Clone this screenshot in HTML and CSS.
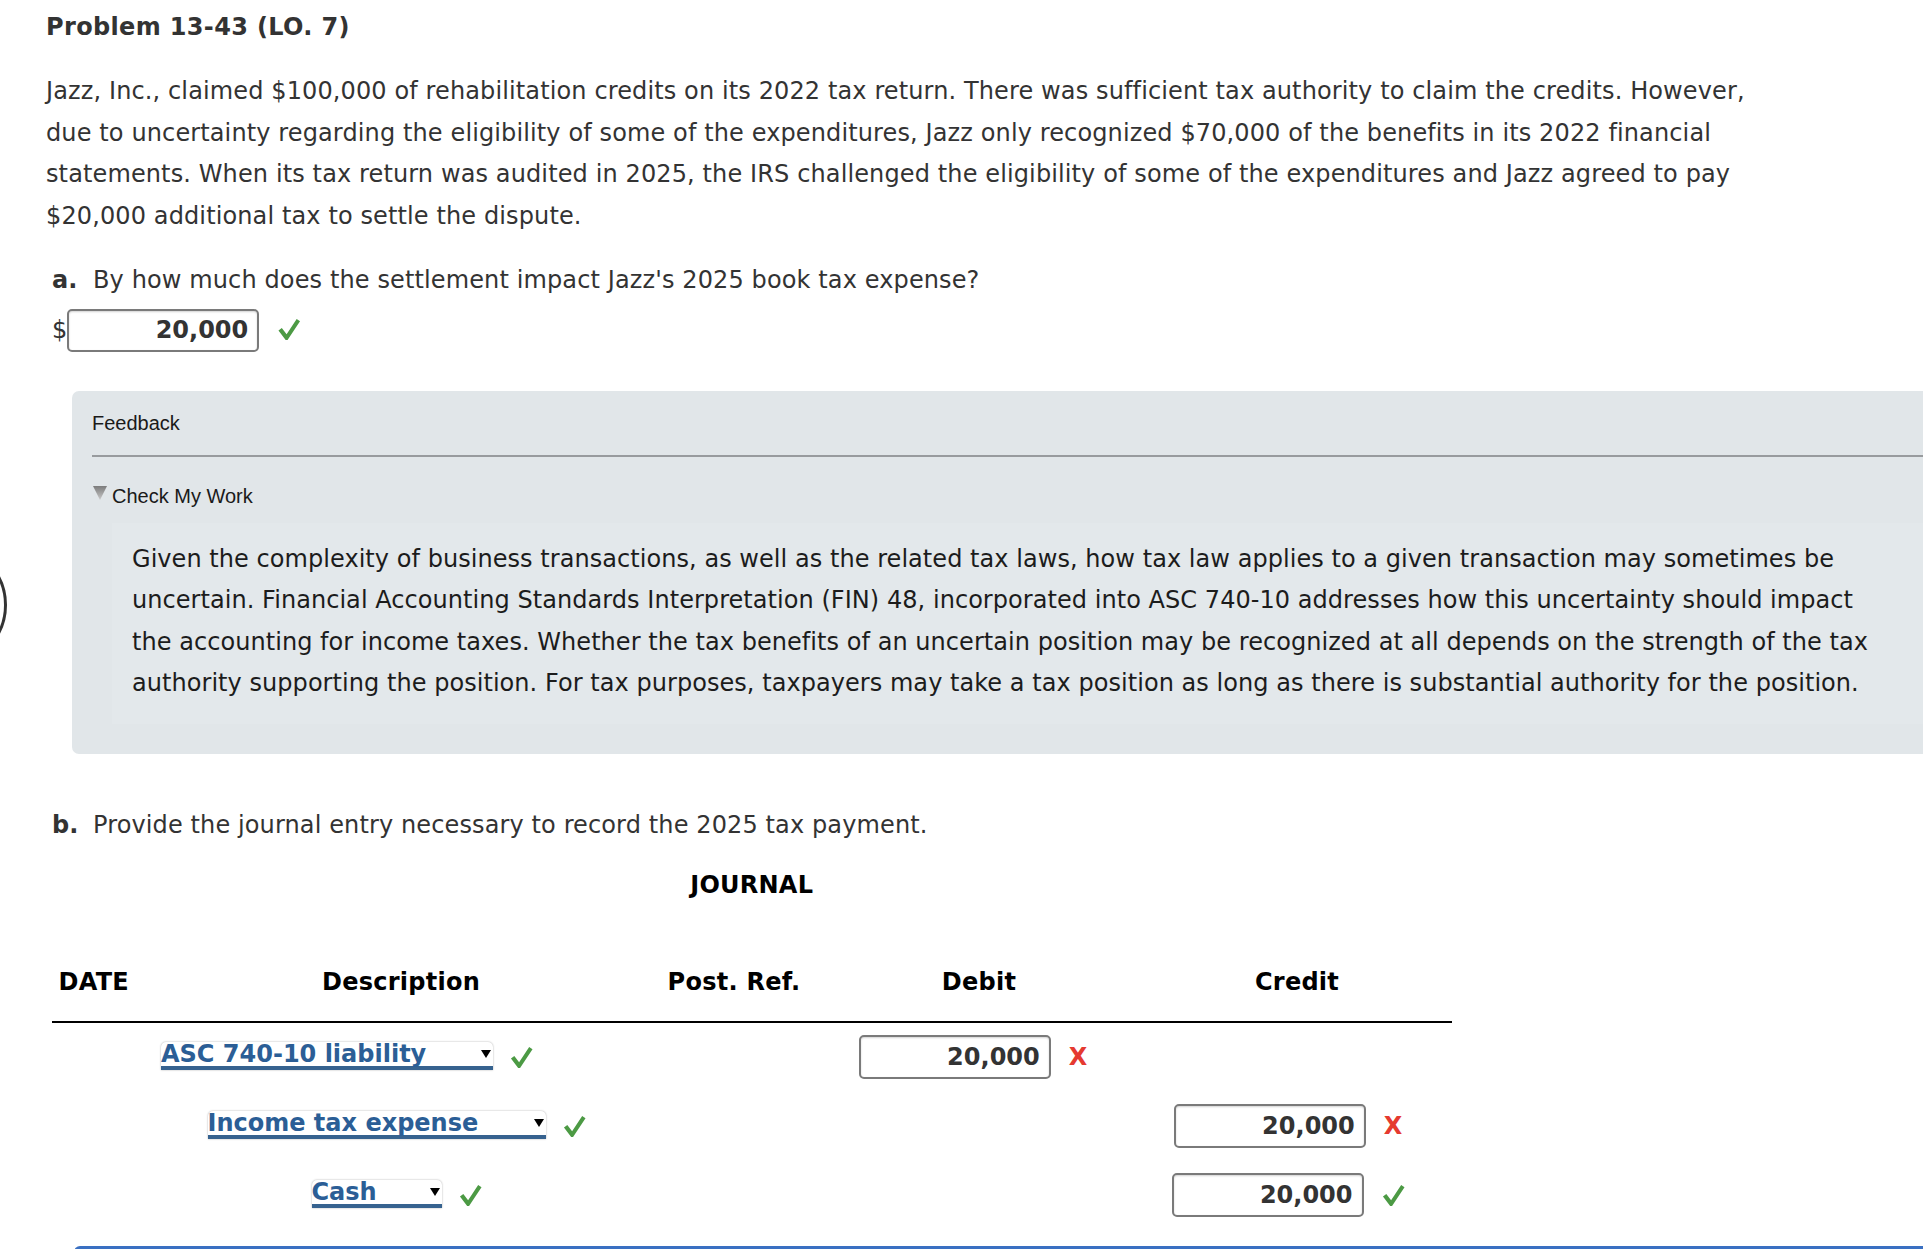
FILE: index.html
```html
<!DOCTYPE html>
<html lang="en">
<head>
<meta charset="utf-8">
<title>Problem 13-43 (LO. 7)</title>
<link rel="stylesheet" href="styles.css">
</head>
<body>
<div class="edge-arc" aria-hidden="true"></div>
<main class="page">
  <h1 class="title">Problem 13-43 (LO. 7)</h1>
  <p class="intro">Jazz, Inc., claimed $100,000 of rehabilitation credits on its 2022 tax return. There was sufficient tax authority to claim the credits. However,<br>due to uncertainty regarding the eligibility of some of the expenditures, Jazz only recognized $70,000 of the benefits in its 2022 financial<br>statements. When its tax return was audited in 2025, the IRS challenged the eligibility of some of the expenditures and Jazz agreed to pay<br>$20,000 additional tax to settle the dispute.</p>

  <section class="question qa">
    <div class="qline"><span class="qlabel">a.</span><span>By how much does the settlement impact Jazz's 2025 book tax expense?</span></div>
    <div class="answer-row">
      <span class="dollar">$</span>
      <input class="num num-a" type="text" value="20,000" readonly>
      <svg class="check check-a" viewBox="0 0 24 24" aria-hidden="true"><polygon points="1,13 4.5,10.5 9.5,17 20,1 23.5,3.5 10.5,23 8.5,23"/></svg>
    </div>
  </section>

  <section class="feedback">
    <div class="fb-head">Feedback</div>
    <div class="cmw">
      <svg class="tri" viewBox="0 0 14 14" aria-hidden="true">
        <defs><linearGradient id="tg" x1="0" y1="0" x2="0" y2="1"><stop offset="0" stop-color="#7c7c7c"/><stop offset="1" stop-color="#c9c9c9"/></linearGradient></defs>
        <polygon points="0,0 14,0 7,14" fill="url(#tg)"/>
      </svg>
      <span>Check My Work</span>
    </div>
    <div class="fb-body">
      <p>Given the complexity of business transactions, as well as the related tax laws, how tax law applies to a given transaction may sometimes be<br>uncertain. Financial Accounting Standards Interpretation (FIN) 48, incorporated into ASC 740-10 addresses how this uncertainty should impact<br>the accounting for income taxes. Whether the tax benefits of an uncertain position may be recognized at all depends on the strength of the tax<br>authority supporting the position. For tax purposes, taxpayers may take a tax position as long as there is substantial authority for the position.</p>
    </div>
  </section>

  <section class="question qb">
    <div class="qline"><span class="qlabel">b.</span><span>Provide the journal entry necessary to record the 2025 tax payment.</span></div>
  </section>

  <div class="journal">
    <div class="j-title">JOURNAL</div>
    <div class="j-head">
      <div class="h-date">DATE</div>
      <div>Description</div>
      <div>Post. Ref.</div>
      <div>Debit</div>
      <div>Credit</div>
    </div>

    <div class="j-row">
      <div class="cell"></div>
      <div class="cell desc-debit">
        <div class="select sel-1"><span class="sel-text">ASC 740-10 liability</span><i class="caret"></i></div>
        <svg class="check" viewBox="0 0 24 24" aria-hidden="true"><polygon points="1,13 4.5,10.5 9.5,17 20,1 23.5,3.5 10.5,23 8.5,23"/></svg>
      </div>
      <div class="cell"></div>
      <div class="cell amt-debit">
        <input class="num" type="text" value="20,000" readonly>
        <span class="xmark">X</span>
      </div>
      <div class="cell"></div>
    </div>

    <div class="j-row">
      <div class="cell"></div>
      <div class="cell desc-credit">
        <div class="select sel-2"><span class="sel-text">Income tax expense</span><i class="caret"></i></div>
        <svg class="check" viewBox="0 0 24 24" aria-hidden="true"><polygon points="1,13 4.5,10.5 9.5,17 20,1 23.5,3.5 10.5,23 8.5,23"/></svg>
      </div>
      <div class="cell"></div>
      <div class="cell"></div>
      <div class="cell amt-credit">
        <input class="num" type="text" value="20,000" readonly>
        <span class="xmark">X</span>
      </div>
    </div>

    <div class="j-row">
      <div class="cell"></div>
      <div class="cell desc-credit">
        <div class="select sel-3"><span class="sel-text">Cash</span><i class="caret"></i></div>
        <svg class="check" viewBox="0 0 24 24" aria-hidden="true"><polygon points="1,13 4.5,10.5 9.5,17 20,1 23.5,3.5 10.5,23 8.5,23"/></svg>
      </div>
      <div class="cell"></div>
      <div class="cell"></div>
      <div class="cell amt-credit">
        <input class="num" type="text" value="20,000" readonly>
        <svg class="check check-amt" viewBox="0 0 24 24" aria-hidden="true"><polygon points="1,13 4.5,10.5 9.5,17 20,1 23.5,3.5 10.5,23 8.5,23"/></svg>
      </div>
    </div>
  </div>

  <div class="next-bar"></div>
</main>
</body>
</html>
```

FILE: styles.css
```css
html, body {
  margin: 0;
  padding: 0;
  overflow: hidden;
  background: #ffffff;
}

body {
  position: relative;
  width: 1923px;
  height: 1249px;
  font-family: "DejaVu Sans", Verdana, sans-serif;
  font-size: 24px;
  color: #333333;
}

.edge-arc {
  position: absolute;
  left: -115px;
  top: 544px;
  width: 122px;
  height: 122px;
  box-sizing: border-box;
  border: 3px solid #333333;
  border-radius: 50%;
}

.page {
  padding: 7px 0 0 46px;
}

.title {
  margin: 0;
  font-size: 24px;
  font-weight: 700;
  line-height: 41.5px;
  letter-spacing: 0.35px;
  color: #333333;
}

.intro {
  margin: 22.5px 0 0 0;
  line-height: 41.5px;
  letter-spacing: 0.12px;
  white-space: nowrap;
}

.question {
  margin-left: 6px;
}

.qa {
  margin-top: 22.9px;
}

.qb {
  margin-top: 50.9px;
}

.qline {
  display: flex;
  line-height: 41.5px;
  letter-spacing: 0.12px;
  white-space: nowrap;
}

.qlabel {
  width: 41px;
  flex: none;
  font-weight: 700;
  letter-spacing: 0;
}

.answer-row {
  display: flex;
  align-items: center;
  margin-top: 7.6px;
  height: 43px;
}

.dollar {
  line-height: 43px;
}

.num {
  box-sizing: border-box;
  width: 192px;
  height: 44px;
  margin: 0;
  padding: 0 9px 0 0;
  border: 2px solid #7a7a7a;
  border-radius: 5px;
  background: #ffffff;
  box-shadow: inset 0 1px 2px rgba(0, 0, 0, 0.18);
  font-family: "DejaVu Sans", Verdana, sans-serif;
  font-size: 24px;
  font-weight: 700;
  color: #333333;
  text-align: right;
  outline: none;
}

.num-a {
  height: 43px;
}

.check {
  flex: none;
  width: 23px;
  height: 23px;
  margin-left: 17px;
  fill: #4c9a44;
}

.check-a {
  width: 24px;
  height: 23px;
  margin-left: 18px;
  margin-top: -2px;
}

.check-amt {
  margin-left: 18px;
}

.feedback {
  margin: 39px -60px 0 26px;
  padding: 21px 0 30px 20px;
  background: #e1e6e9;
  border-radius: 7px 0 0 7px;
  font-family: "Liberation Sans", Arial, sans-serif;
  color: #1a1a1a;
}

.fb-head {
  font-size: 20px;
  line-height: 22px;
  padding-bottom: 21px;
  border-bottom: 2px solid #989b9e;
}

.cmw {
  display: flex;
  align-items: flex-start;
  margin-top: 28.3px;
  font-size: 20px;
  line-height: 22px;
}

.tri {
  flex: none;
  width: 14px;
  height: 14px;
  margin: 1px 5px 0 1px;
}

.fb-body {
  margin: 15.7px 0 0 20px;
  padding: 16px 0 19px 20px;
  background: #e3e8eb;
}

.fb-body p {
  margin: 0;
  font-family: "DejaVu Sans", Verdana, sans-serif;
  font-size: 24px;
  line-height: 41.5px;
  letter-spacing: 0.05px;
  color: #1c1c1c;
  white-space: nowrap;
}

.journal {
  margin-left: 5.5px;
  width: 1400.5px;
}

.j-title {
  margin-top: 18.5px;
  text-align: center;
  font-weight: 700;
  line-height: 41.5px;
  letter-spacing: 0.25px;
  color: #000000;
}

.j-head,
.j-row {
  display: grid;
  grid-template-columns: 98.5px 502px 164px 326px 310px;
}

.j-head {
  margin-top: 55.5px;
  padding-bottom: 17.6px;
  border-bottom: 2px solid #000000;
  line-height: 41.5px;
  font-weight: 700;
  letter-spacing: 0.25px;
  color: #000000;
  text-align: center;
}

.j-head .h-date {
  text-align: left;
  padding-left: 7px;
}

.j-row {
  height: 69px;
}

.cell {
  display: flex;
  align-items: center;
  justify-content: center;
}

.desc-debit {
  padding-right: 108px;
}

.desc-credit {
  padding-right: 9px;
}

.amt-debit {
  padding-right: 12px;
}

.amt-credit {
  padding-right: 18px;
}

.select {
  box-sizing: border-box;
  display: flex;
  align-items: flex-start;
  height: 28px;
  margin-bottom: 3px;
  background: #ffffff;
  border-bottom: 4px solid #36628f;
  border-radius: 5px 5px 0 0;
  box-shadow: 0 0 2px rgba(0, 0, 0, 0.35);
  font-weight: 700;
  color: #2b5e96;
  white-space: nowrap;
}

.sel-text {
  line-height: 24px;
}

.select .caret {
  flex: none;
  margin: 8px 2px 0 auto;
  width: 0;
  height: 0;
  border-left: 5.5px solid transparent;
  border-right: 5.5px solid transparent;
  border-top: 8px solid #000000;
}

.sel-1 { width: 332px; }
.sel-2 { width: 338px; }
.sel-3 { width: 130px; }

.xmark {
  flex: none;
  margin-left: 18px;
  font-weight: 700;
  color: #e53a30;
  line-height: 24px;
}

.next-bar {
  margin: 16px 0 0 28px;
  height: 6px;
  border-top: 3px solid #3a70c2;
  border-radius: 6px 0 0 0;
}
```
